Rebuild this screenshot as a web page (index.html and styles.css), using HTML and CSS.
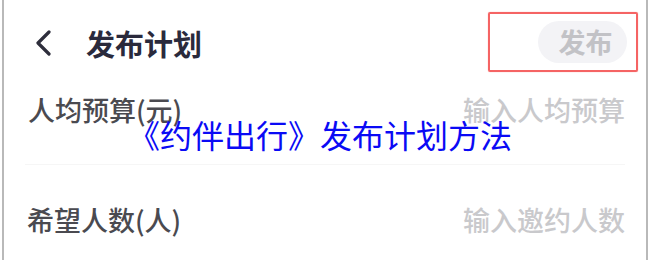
FILE: index.html
```
<!DOCTYPE html>
<html lang="zh-CN">
<head>
<meta charset="utf-8">
<link rel="stylesheet" href="styles.css">
</head>
<body>
<div class="frame">
  <div class="header">
    <svg class="back" width="20" height="26" viewBox="0 0 20 26"><path d="M16 2 L5 13 L16 24" fill="none" stroke="#2e2e3c" stroke-width="3.2" stroke-linecap="round" stroke-linejoin="round"/></svg>
    <div class="title">发布计划</div>
    <div class="hl">
      <div class="pill">发布</div>
    </div>
  </div>
  <div class="row first">
    <span class="label">人均预算(元)</span>
    <span class="ph">输入人均预算</span>
  </div>
  <div class="row second">
    <span class="label">希望人数(人)</span>
    <span class="ph">输入邀约人数</span>
  </div>
  <div class="caption">《约伴出行》发布计划方法</div>
</div>
</body>
</html>
```
FILE: styles.css
```
html, body {
  margin: 0;
  padding: 0;
  background: #fff;
}
body {
  width: 650px;
  height: 260px;
  overflow: hidden;
  font-family: "Noto Sans CJK SC", "Noto Sans", sans-serif;
}
.frame {
  position: relative;
  box-sizing: border-box;
  height: 260px;
  margin: 0 2px;
  border-left: 2px solid #b9b9b9;
  border-right: 2px solid #b9b9b9;
  display: flex;
  flex-direction: column;
}
.header {
  display: flex;
  align-items: center;
  height: 85px;
  box-sizing: border-box;
  padding: 12px 8px 13px 29px;
}
.back {
  display: block;
  margin-top: 2px;
}
.title {
  margin-left: 33px;
  font-size: 29px;
  line-height: 32px;
  font-weight: 700;
  color: #2a2a3c;
  margin-top: 2px;
}
.hl {
  margin-left: auto;
  width: 150px;
  height: 60px;
  box-sizing: border-box;
  border: 2px solid #f56464;
  border-radius: 2px;
  box-shadow: 0 0 1px #f88;
  display: flex;
  align-items: center;
  justify-content: flex-end;
  padding-right: 9px;
}
.pill {
  width: 89px;
  height: 42px;
  border-radius: 21px;
  background: #f3f3f6;
  color: #c2c2c6;
  font-size: 27px;
  font-weight: 700;
  line-height: 42px;
  text-align: center;
  box-sizing: border-box;
  padding-left: 6px;
}
.row {
  display: flex;
  justify-content: space-between;
  font-size: 27px;
  line-height: 32px;
}
.row.first {
  height: 80px;
  box-sizing: border-box;
  padding: 9px 0 0 3px;
  margin: 0 21px;
  border-bottom: 1px solid #f6f6f6;
}
.row.second {
  padding: 39px 21px 0 23px;
}
.label {
  color: #4a4a50;
  font-weight: 500;
}
.ph {
  color: #c9c9cc;
  font-weight: 500;
}
.caption {
  position: absolute;
  left: 124px;
  top: 115px;
  font-size: 32px;
  line-height: 38px;
  color: #0a0af5;
  white-space: nowrap;
}
```
